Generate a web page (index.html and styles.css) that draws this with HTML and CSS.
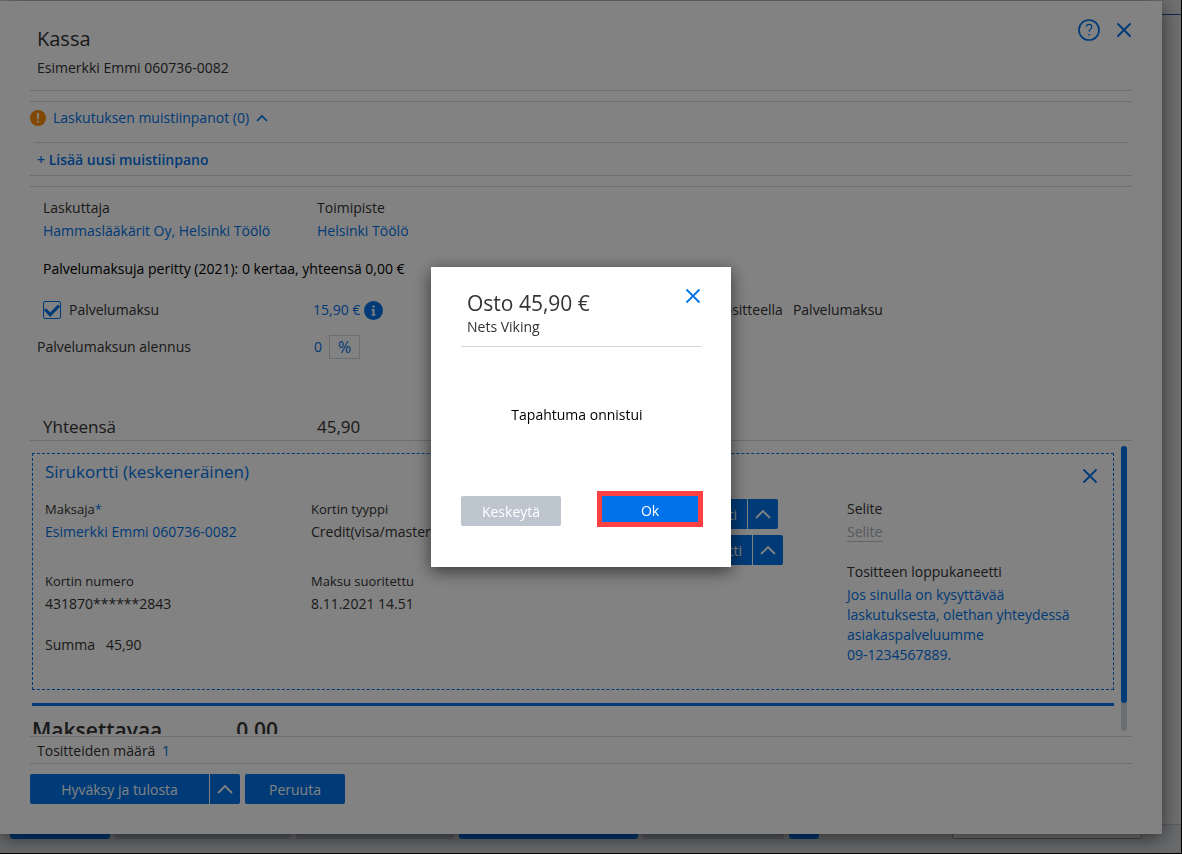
FILE: index.html
```
<!DOCTYPE html>
<html lang="fi">

<head>
    <meta charset="utf-8">
    <title>Kassa</title>
    <link rel="stylesheet" href="styles.css">
</head>

<body>
    <div class="app">
        <div class="app-top"></div>
        <main class="app-main"></main>
        <div class="app-bar">
            <span class="stub blue w100"></span>
            <span class="stub w176"></span>
            <span class="stub w158"></span>
            <span class="stub blue w179"></span>
            <span class="stub w141"></span>
            <span class="stub blue w30"></span>
            <span class="stub field"></span>
        </div>
    </div>

    <section class="checkout">
        <header class="head">
            <div class="head-text">
                <h1>Kassa</h1>
                <p>Esimerkki Emmi 060736-0082</p>
            </div>
            <button class="icon-btn" aria-label="Ohje">
                <svg width="24" height="24" viewBox="0 0 24 24" fill="none" stroke="currentColor">
                    <circle cx="12" cy="12" r="10" stroke-width="1.7" />
                    <path d="M9.2 8.6C9.4 7.2 10.5 6.4 12 6.4c1.7 0 2.8.9 2.8 2.4 0 2.3-2.7 2.5-2.7 5" stroke-width="1.2" />
                    <path d="M12.1 16v1.6" stroke-width="1.4" />
                </svg>
            </button>
            <button class="icon-btn" aria-label="Sulje">
                <svg width="16" height="16" viewBox="0 0 16 16" stroke="currentColor" stroke-width="2">
                    <path d="M1.5 1.5l13 13M14.5 1.5l-13 13" />
                </svg>
            </button>
        </header>

        <section class="notes">
            <a href="#" class="notes-toggle">
                <svg width="16" height="16" viewBox="0 0 16 16">
                    <circle cx="8" cy="8" r="8" fill="#ff8c00" />
                    <path d="M6.9 3h2.2l-.3 6.2H7.2z" fill="#fff" />
                    <rect x="7" y="10.6" width="2" height="2" fill="#fff" />
                </svg>
                Laskutuksen muistiinpanot (0)
                <svg width="12" height="8" viewBox="0 0 12 8" fill="none" stroke="currentColor" stroke-width="1.6">
                    <path d="M1 7l5-5 5 5" />
                </svg>
            </a>
            <div class="notes-add">
                <a href="#">+ Lisää uusi muistiinpano</a>
            </div>
        </section>

        <section class="invoice">
            <div class="row">
                <div>
                    <h4>Laskuttaja</h4>
                    <a href="#">Hammaslääkärit Oy, Helsinki Töölö</a>
                </div>
                <div>
                    <h4>Toimipiste</h4>
                    <a href="#">Helsinki Töölö</a>
                </div>
            </div>
            <p class="charged">Palvelumaksuja peritty (2021): 0 kertaa, yhteensä 0,00 €</p>
            <div class="row fee">
                <label class="check">
                    <input type="checkbox" checked>
                    Palvelumaksu
                </label>
                <div class="amount">
                    <a href="#">15,90 €</a>
                    <svg width="19" height="19" viewBox="0 0 19 19">
                        <circle cx="9.5" cy="9.5" r="9.5" fill="#0073ea" />
                        <path d="M7.5 8h3v5.500h1v1.200h-4v-1.200h1V9.200h-1zM8.400 4.500h2.200v2H8.400z" fill="#fff" />
                    </svg>
                </div>
                <span>Tositteella</span>
                <span class="fee-name">Palvelumaksu</span>
            </div>
            <div class="row discount">
                <label for="discount">Palvelumaksun alennus</label>
                <div class="amount">
                    <input type="text" id="discount" value="0">
                    <button class="percent">%</button>
                </div>
            </div>
            <div class="row total">
                <span>Yhteensä</span>
                <span>45,90</span>
            </div>
        </section>

        <section class="payments">
            <div class="payments-list">
                <article class="card">
                    <div class="card-head">
                        <h2>Sirukortti (keskeneräinen)</h2>
                        <button class="icon-btn" aria-label="Poista">
                            <svg width="16" height="16" viewBox="0 0 16 16" stroke="currentColor" stroke-width="1.8">
                                <path d="M1.5 1.5l13 13M14.5 1.5l-13 13" />
                            </svg>
                        </button>
                    </div>
                    <div class="card-body">
                        <div class="col">
                            <div class="item">
                                <h5>Maksaja<span class="required">*</span></h5>
                                <a href="#">Esimerkki Emmi 060736-0082</a>
                            </div>
                            <div class="item">
                                <h5>Kortin numero</h5>
                                <p>431870******2843</p>
                            </div>
                            <p class="sum"><span>Summa</span><span>45,90</span></p>
                        </div>
                        <div class="col">
                            <div class="item">
                                <h5>Kortin tyyppi</h5>
                                <p>Credit(visa/mastercard)</p>
                            </div>
                            <div class="item">
                                <h5>Maksu suoritettu</h5>
                                <p>8.11.2021 14.51</p>
                            </div>
                        </div>
                        <div class="col actions">
                            <div class="split">
                                <button class="btn">Kuitti</button>
                                <button class="btn caret" aria-label="Lisää">
                                    <svg width="16" height="10" viewBox="0 0 16 10" fill="none" stroke="currentColor" stroke-width="1.8">
                                        <path d="M1 9l7-7 7 7" />
                                    </svg>
                                </button>
                            </div>
                            <div class="split">
                                <button class="btn">Kortti</button>
                                <button class="btn caret" aria-label="Lisää">
                                    <svg width="16" height="10" viewBox="0 0 16 10" fill="none" stroke="currentColor" stroke-width="1.8">
                                        <path d="M1 9l7-7 7 7" />
                                    </svg>
                                </button>
                            </div>
                        </div>
                        <div class="col">
                            <div class="item">
                                <label for="description">Selite</label>
                                <input type="text" id="description" placeholder="Selite">
                            </div>
                            <div class="item closing">
                                <h4>Tositteen loppukaneetti</h4>
                                <a href="#">Jos sinulla on kysyttävää laskutuksesta, olethan yhteydessä asiakaspalveluumme <span class="phone">09-1234567889.</span></a>
                            </div>
                        </div>
                    </div>
                </article>
                <div class="payable">
                    <span>Maksettavaa</span>
                    <span>0,00</span>
                </div>
            </div>
            <div class="scrollbar">
                <div class="thumb"></div>
            </div>
        </section>

        <p class="receipts">Tositteiden määrä <a href="#">1</a></p>

        <footer class="buttons">
            <div class="split">
                <button class="btn approve">Hyväksy ja tulosta</button>
                <button class="btn caret" aria-label="Lisää">
                    <svg width="16" height="10" viewBox="0 0 16 10" fill="none" stroke="currentColor" stroke-width="1.8">
                        <path d="M1 9l7-7 7 7" />
                    </svg>
                </button>
            </div>
            <button class="btn cancel">Peruuta</button>
        </footer>
    </section>

    <div class="overlay">
        <section class="modal" role="dialog" aria-labelledby="modal-title">
            <header class="modal-head">
                <div>
                    <h1 id="modal-title">Osto 45,90 €</h1>
                    <p>Nets Viking</p>
                </div>
                <button class="icon-btn" aria-label="Sulje">
                    <svg width="16" height="16" viewBox="0 0 16 16" stroke="currentColor" stroke-width="1.8">
                        <path d="M1.5 1.5l13 13M14.5 1.5l-13 13" />
                    </svg>
                </button>
            </header>
            <p class="message">Tapahtuma onnistui</p>
            <footer class="modal-buttons">
                <button class="btn abort" disabled>Keskeytä</button>
                <button class="btn ok">Ok</button>
            </footer>
        </section>
    </div>
</body>

</html>
```

FILE: styles.css
```
* {
    box-sizing: border-box;
}

body {
    margin: 0;
    height: 100vh;
    overflow: hidden;
    font-family: 'Segoe UI', 'Open Sans', 'Noto Sans', sans-serif;
    font-size: 14px;
    line-height: 20px;
    color: #333;
}

h1,
h2,
h4,
h5,
p {
    margin: 0;
    font-weight: normal;
}

h1 {
    font-size: 20px;
    line-height: 28px;
}

h2 {
    font-size: 17px;
    line-height: 24px;
    color: #0073ea;
}

h4 {
    font-size: 14px;
}

h5 {
    font-size: 13px;
}

a {
    color: #0073ea;
    text-decoration: none;
}

button,
input {
    font: inherit;
    margin: 0;
    padding: 0;
    border: none;
    background: none;
}

svg {
    display: block;
    flex: none;
}

/* page behind the checkout */
.app {
    height: 100%;
    display: flex;
    flex-direction: column;
    background-color: #dedede;
    border-right: 1px solid #000;
    border-bottom: 1px solid #000;
}

.app-top {
    height: 15px;
    border-bottom: 1px solid #2a4fae;
}

.app-main {
    flex: 1;
}

.app-bar {
    display: flex;
    gap: 5px;
    height: 29px;
    padding: 0 39px 14px 10px;
    background-color: #cfd2d6;
    border-top: 1px solid #b4bac0;
}

.stub {
    background-color: #b4bac2;
    border-radius: 0 0 3px 3px;
}

.stub.blue {
    background-color: #0073ea;
}

.stub.field {
    width: 190px;
    margin-left: auto;
    background-color: #eee;
    border: 1px solid #8a9097;
}

.w30 { width: 30px; }
.w100 { width: 100px; }
.w141 { width: 141px; }
.w158 { width: 158px; }
.w176 { width: 176px; }
.w179 { width: 179px; }

/* checkout */
.checkout {
    position: absolute;
    inset: 1px 20px 20px 0;
    display: flex;
    flex-direction: column;
    padding: 0 30px 30px;
    background-color: #fff;
    box-shadow: 0 4px 20px rgba(0, 0, 0, .6);
}

.head {
    display: flex;
    align-items: flex-start;
    gap: 15px;
    padding: 24px 0 12px 7px;
    border-bottom: 1px solid #d3d7db;
}

.head-text {
    flex: 1;
}

.head-text p {
    margin-top: 5px;
}

.icon-btn {
    display: flex;
    align-items: center;
    height: 24px;
    color: #0073ea;
    cursor: pointer;
}

.head .icon-btn {
    margin-top: -7px;
}

.notes {
    margin-top: 10px;
    padding-top: 6px;
    border-top: 1px solid #d3d7db;
    border-bottom: 1px solid #d3d7db;
}

.notes-toggle {
    display: flex;
    align-items: center;
    gap: 7px;
}

.notes-add {
    margin: 14px 5px 0;
    padding: 7px 2px 5px;
    border-top: 1px solid #d3d7db;
    font-weight: 600;
}

.invoice {
    margin-top: 10px;
    padding-top: 11px;
    border-top: 1px solid #d3d7db;
    border-bottom: 1px solid #d3d7db;
}

.row {
    display: flex;
    align-items: center;
    padding-left: 13px;
}

.row > :first-child {
    width: 274px;
}

.row h4 {
    margin-bottom: 3px;
}

.charged {
    margin: 18px 0 21px;
    padding-left: 13px;
    color: #000;
}

.check {
    display: flex;
    align-items: center;
    gap: 8px;
}

.check input {
    appearance: none;
    display: grid;
    place-items: center;
    width: 18px;
    height: 18px;
    border: 1px solid #0073ea;
    border-radius: 2px;
}

.check input:checked::before {
    content: "";
    width: 11px;
    height: 6px;
    margin-top: -3px;
    border-left: 3px solid #0073ea;
    border-bottom: 3px solid #0073ea;
    transform: rotate(-45deg);
}

.fee > :first-child {
    width: 270px;
}

.amount {
    display: flex;
    align-items: center;
    gap: 4px;
    width: 403px;
}

.fee-name {
    margin-left: 10px;
}

.discount {
    margin-top: 15px;
    padding-left: 7px;
}

.discount > :first-child {
    width: 277px;
}

.discount input {
    width: 11px;
    color: #0073ea;
}

.percent {
    width: 31px;
    height: 24px;
    border: 1px solid #d3d7db;
    color: #0073ea;
    font-size: 16px;
    line-height: 20px;
}

.total {
    margin-top: 56px;
    padding-bottom: 1px;
    font-size: 17px;
    line-height: 24px;
}

.payments {
    flex: 1;
    min-height: 0;
    display: flex;
    gap: 7px;
    margin-bottom: 2px;
    padding: 0 5px 0 2px;
    overflow: hidden;
}

.payments-list {
    flex: 1;
    padding-top: 12px;
}

.card {
    padding: 6px 0 24px 12px;
    border: 1px dashed #0073ea;
}

.card-head {
    display: flex;
    justify-content: space-between;
    align-items: flex-start;
    padding-right: 15px;
}

.card-head .icon-btn {
    margin-top: 4px;
    height: 24px;
}

.card-body {
    display: grid;
    grid-template-columns: 266px 200px 1fr 266px;
    margin-top: 11px;
}

.item {
    display: flex;
    flex-direction: column;
    gap: 3px;
    margin-bottom: 29px;
}

.closing {
    max-width: 230px;
    margin: 0;
}

.phone {
    white-space: nowrap;
}

.required {
    color: #0073ea;
}

.sum {
    display: flex;
    gap: 11px;
    margin-top: -8px;
}

#description {
    width: 36px;
    height: 20px;
    margin-bottom: -9px;
    border-bottom: 1px solid #c0c6cd;
}

#description::placeholder {
    color: #aab1b9;
    opacity: 1;
}

.actions {
    display: flex;
    flex-direction: column;
    align-items: flex-end;
    gap: 6px;
    padding-right: 64px;
}

.actions .split:first-child {
    margin-right: 5px;
}

.payable {
    display: flex;
    gap: 74px;
    margin-top: 13px;
    padding-top: 8px;
    border-top: 3px solid #0073ea;
    font-size: 21px;
    line-height: 32px;
    font-weight: 600;
}

.scrollbar {
    width: 6px;
    margin: 5px 0 3px;
    border-radius: 3px;
    background-color: #d3d7db;
}

.thumb {
    height: 90%;
    border-radius: 3px;
    background-color: #0073ea;
}

.receipts {
    padding: 4px 7px 2px;
    border-top: 1px solid #d3d7db;
    border-bottom: 1px solid #d3d7db;
}

.receipts a {
    margin-left: 3px;
}

.buttons {
    display: flex;
    gap: 5px;
    margin-top: 10px;
}

.split {
    display: flex;
    gap: 1px;
}

.btn {
    height: 30px;
    padding: 1px 10px 0;
    border-radius: 2px;
    background-color: #0073ea;
    color: #fff;
    cursor: pointer;
}

.split .btn:first-child {
    border-radius: 2px 0 0 2px;
}

.split .caret {
    display: flex;
    align-items: center;
    padding: 0 7px;
    border-radius: 0 2px 2px 0;
}

.approve {
    width: 179px;
}

.cancel {
    width: 100px;
}

/* payment result */
.overlay {
    position: fixed;
    inset: 0;
    display: grid;
    place-items: center;
    padding: 0 20px 20px 0;
    background-color: rgba(0, 0, 0, .49);
}

.modal {
    display: flex;
    flex-direction: column;
    width: 300px;
    height: 300px;
    padding: 23px 30px 41px;
    background-color: #fff;
    box-shadow: 0 4px 16px rgba(0, 0, 0, .6);
}

.modal-head {
    display: flex;
    justify-content: space-between;
    align-items: flex-start;
    padding: 0 0 9px 6px;
    border-bottom: 1px solid #d3d7db;
}

.modal-head h1 {
    font-size: 21px;
    line-height: 27px;
}

.modal-head .icon-btn {
    margin-top: -6px;
}

.message {
    flex: 1;
    padding-top: 58px;
    padding-right: 8px;
    text-align: center;
    color: #000;
}

.modal-buttons {
    display: flex;
    justify-content: space-between;
    padding-right: 3px;
}

.abort {
    width: 100px;
    background-color: #bdc5cf;
}

.ok {
    width: 96px;
    height: 26px;
    padding-top: 4px;
    border-radius: 0;
    outline: 5px solid #ff4040;
}
```
